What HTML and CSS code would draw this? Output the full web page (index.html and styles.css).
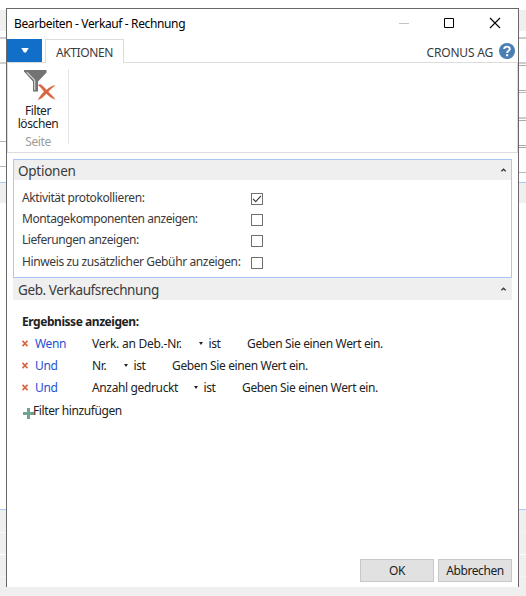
FILE: index.html
```
<!DOCTYPE html>
<html lang="de">
<head>
<meta charset="utf-8">
<title>Bearbeiten - Verkauf - Rechnung</title>
<link rel="stylesheet" href="styles.css">
</head>
<body>
<div class="desktop">
  <div class="backdrop backdrop-left"></div>
  <main class="dialog">
    <header class="titlebar">
      <span class="title">Bearbeiten - Verkauf - Rechnung</span>
      <svg class="window-controls" width="110" height="16" viewBox="0 0 110 16" fill="none">
        <path d="M1 8.5h10" stroke="#c4c4c4"/>
        <path d="M46.5 3.5h9v9h-9z" stroke="#000"/>
        <path d="M92 3l10 10M102 3l-10 10" stroke="#000" stroke-width="1.1"/>
      </svg>
    </header>
    <nav class="tabs">
      <button class="app-menu" aria-label="Menü"><svg width="8" height="5" viewBox="0 0 8 5"><path d="M.3 0h7.4L5 4.6H3z" fill="#fff"/></svg></button>
      <div class="tab">AKTIONEN</div>
      <div class="company">CRONUS AG</div>
      <svg class="help" width="16" height="16" viewBox="0 0 16 16"><circle cx="8" cy="8" r="8" fill="#4a7fb5"/><path d="M5.2 6.1C5.2 2.9 10.8 2.8 10.8 6C10.8 7.8 8.1 7.9 8.1 10" fill="none" stroke="#fff" stroke-width="1.9"/><path d="M7 11.2h2.2v2H7z" fill="#fff"/></svg>
    </nav>
    <section class="ribbon">
      <div class="ribbon-group">
        <svg class="filter-icon" width="32" height="30" viewBox="0 0 32 30">
          <path d="M0 0H22.500V2.5L14 11.5V21.5H9V11.5L0 1.500z" fill="#737373"/>
          <path d="M3 2.3L10.7 10.2V20" fill="none" stroke="#d8d8d8" stroke-width="1.2"/>
          <path d="M14.3 15.2C16.8 13.5 18 15.5 22.5 20C25.5 17.7 28 15.7 31 15.5C28.500 17.200 26 19.500 24.200 21.800C27 24.500 29 26.500 31 29.300C27.500 28.500 25 26 22.300 23.600C19.500 26 18 29 14.300 29.500C15.500 26.500 18 24 20.200 21.700C18.500 19.500 17 17 14.300 15.200z" fill="#d9633f" stroke="#d9633f" stroke-width=".4"/>
        </svg>
        <div class="action">Filter<br>löschen</div>
        <div class="group-name">Seite</div>
      </div>
    </section>
    <section class="panel">
      <h2 class="panel-head"><span class="panel-title">Optionen</span><svg class="chevron" width="5" height="4" viewBox="0 0 5 4"><path d="M.4 3.300L2.500 1.200 4.600 3.300" fill="none" stroke="#333" stroke-width="1.300"/></svg></h2>
      <div class="options">
        <div class="option"><span>Aktivität protokollieren:</span><i class="box"><svg width="10" height="10" viewBox="0 0 10 10"><path d="M1 4.800L3.700 7.600 9 1.800" fill="none" stroke="#444" stroke-width="1.200"/></svg></i></div>
        <div class="option tight"><span>Montagekomponenten anzeigen:</span><i class="box"></i></div>
        <div class="option tight"><span>Lieferungen anzeigen:</span><i class="box"></i></div>
        <div class="option"><span>Hinweis zu zusätzlicher Gebühr anzeigen:</span><i class="box"></i></div>
      </div>
    </section>
    <section class="invoice">
      <h2 class="panel-head invoice-head"><span class="panel-title geb">Geb. Verkaufsrechnung</span><svg class="chevron" width="5" height="4" viewBox="0 0 5 4"><path d="M.4 3.300L2.500 1.200 4.600 3.300" fill="none" stroke="#333" stroke-width="1.300"/></svg></h2>
      <h3 class="results">Ergebnisse anzeigen:</h3>
      <div class="condition"><svg class="remove" width="6" height="7" viewBox="0 0 6 7"><path d="M.5 .8L5.500 6.200M5.500 .8L.5 6.200" stroke="#d9633f" stroke-width="1.600"/></svg><span class="join">Wenn</span><span class="field field-customer">Verk. an Deb.-Nr.</span><i class="caret"></i><span class="is">ist</span><span>Geben Sie einen Wert ein.</span></div>
      <div class="condition"><svg class="remove" width="6" height="7" viewBox="0 0 6 7"><path d="M.5 .8L5.500 6.200M5.500 .8L.5 6.200" stroke="#d9633f" stroke-width="1.600"/></svg><span class="join">Und</span><span class="field field-number">Nr.</span><i class="caret"></i><span class="is">ist</span><span>Geben Sie einen Wert ein.</span></div>
      <div class="condition"><svg class="remove" width="6" height="7" viewBox="0 0 6 7"><path d="M.5 .8L5.500 6.200M5.500 .8L.5 6.200" stroke="#d9633f" stroke-width="1.600"/></svg><span class="join">Und</span><span class="field field-printed">Anzahl gedruckt</span><i class="caret"></i><span class="is">ist</span><span>Geben Sie einen Wert ein.</span></div>
      <div class="add"><svg class="plus" width="11" height="11" viewBox="0 0 11 11"><path d="M5.500 0v11M0 5.500h11" stroke="#6fa58f" stroke-width="3"/></svg><span>Filter hinzufügen</span></div>
    </section>
    <footer class="buttons">
      <button class="button">OK</button>
      <button class="button">Abbrechen</button>
    </footer>
  </main>
  <div class="backdrop backdrop-right"></div>
</div>
</body>
</html>
```

FILE: styles.css
```
* { box-sizing: border-box; }
body {
  margin: 0;
  background: #fff;
  color: #3a3a3a;
  font: 12px/16px "Noto Sans", "Segoe UI", sans-serif;
  letter-spacing: -0.4px;
  white-space: nowrap;
}
h2, h3 { margin: 0; font: inherit; }
button { border: 0; padding: 0; font: inherit; letter-spacing: inherit; color: inherit; }
svg { display: block; flex: none; }

.desktop {
  display: grid;
  grid-template-columns: 6px 513px 7px;
  grid-template-rows: 587px 9px;
  height: 596px;
  background: linear-gradient(#efefef, #efefef) 0 587px / 100% 9px no-repeat;
}
.backdrop-left {
  background: linear-gradient(#fff 10px, #efefef 10px 31px, #fff 31px 37px, #ccc 37px 39px, #fff 39px 62px, #d0d0d0 62px 64px, #fff 64px 141px, #b5b5b5 141px 142px, #fff 142px 166px, #b5b5b5 166px 167px, #fff 167px 182px, #a9c8f8 182px 183px, #efefef 183px 203px, #fff 203px 509px, #a9c8f8 509px 510px, #efefef 510px 532px, #f8f8f8 532px 533px, #efefef 533px 554px, #fff 554px 555px, #efefef 555px 576px, #f4f4f4 576px 577px, #efefef 577px);
}
.backdrop-right {
  background: linear-gradient(#fff 10px, #efefef 10px 31px, #fff 31px 37px, #ccc 37px 39px, #fff 39px 62px, #ccc 62px 64px, #fff 64px 65px, #aaa 65px 66px, #fff 66px 90px, #aaa 90px 91px, #fff 91px 92px, #bbb 92px 93px, #fff 93px 117px, #ccc 117px 119px, #fff 119px 120px, #aaa 120px 121px, #fff 121px 145px, #aaa 145px 146px, #fff 146px 147px, #aaa 147px 148px, #fff 148px 172px, #bbb 172px 173px, #fff 173px 182px, #a9c8f8 182px 183px, #efefef 183px 203px, #fff 203px 509px, #a9c8f8 509px 510px, #efefef 510px 532px, #f4f4f4 532px 533px, #efefef 533px 554px, #fff 554px 555px, #efefef 555px 576px, #f4f4f4 576px 577px, #efefef 577px);
}
.dialog {
  display: flex;
  flex-direction: column;
  border: 1px solid #686868;
  border-bottom: 0;
  margin-top: 8px;
  background: #fff;
}

.titlebar { display: flex; align-items: center; height: 30px; padding: 0 13px 2px 7px; color: #000; }
.title { flex: 1; padding-top: 1px; letter-spacing: -0.37px; }
.window-controls { margin-right: -3px; }

.tabs { display: flex; height: 24px; box-shadow: inset 0 -1px #dcdcdc; }
.app-menu { display: grid; place-items: center; width: 35px; height: 23px; background: #116fca; }
.tab {
  width: 79px;
  height: 24px;
  margin-left: 3px;
  padding: 5px 0 0 10px;
  border: 1px solid #dcdcdc;
  border-bottom: 0;
  background: #fff;
}
.company { margin-left: auto; padding-top: 6px; letter-spacing: -0.2px; }
.help { margin: 4px 3px 0 6px; }

.ribbon { height: 90px; padding: 6px 0 0; border: 1px solid #dcdcdc; border-top: 0; }
.ribbon-group {
  display: flex;
  flex-direction: column;
  align-items: center;
  width: 61px;
  height: 75px;
  border-right: 1px solid #e3e3e3;
  text-align: center;
  line-height: 13px;
}
.filter-icon { margin: 1px 0 4px 3px; }
.action { color: #222; }
.group-name { margin-top: 5px; color: #9c9c9c; }

.panel { height: 119px; margin: 6px 6px 0; border: 1px solid #a9c8f8; }
.panel-head { display: flex; align-items: center; height: 20px; padding: 0 5px 0 4px; background: #efefef; }
.panel-title { flex: 1; padding-top: 2px; font-size: 13.5px; letter-spacing: -0.25px; }
.geb { letter-spacing: -0.4px; }
.options { padding: 9px 0 0 8px; }
.option { display: flex; height: 21.2px; }
.option span { width: 229px; padding-top: 1px; letter-spacing: -0.38px; }
.option.tight span { letter-spacing: -0.44px; }
.box { width: 12px; height: 12px; margin-top: 4px; border: 1px solid #707070; }

.invoice { flex: 1; margin: 0 6px; }
.invoice-head { height: 22px; padding: 0 6px 0 5px; }
.results { margin: 14px 0 3px 9px; font-weight: 700; line-height: 16px; letter-spacing: -0.45px; color: #222; }
.condition { display: flex; align-items: center; height: 22.2px; padding-left: 9px; color: #222; letter-spacing: -0.36px; }
.remove { margin: 0 7px 2px 0; }
.join { width: 57px; color: #1e50d2; }
.field-customer { width: 107px; letter-spacing: -0.25px; }
.field-number { width: 32px; }
.field-printed { width: 102px; }
.caret { margin-bottom: 2px; border: solid transparent; border-width: 3px 2.5px 0; border-top-color: #222; }
.is { width: 38.5px; margin-left: 5.5px; }
.add { display: flex; align-items: center; height: 22px; padding-left: 10px; color: #222; }
.plus { margin: 5px -1px 0 0; }

.buttons { display: flex; justify-content: flex-end; gap: 4px; padding: 0 6px 5px; }
.button { width: 74px; height: 23px; border: 1px solid #c8c8c8; background: #e1e1e1; color: #222; }
```
